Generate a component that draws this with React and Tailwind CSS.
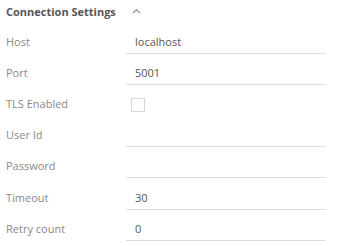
import React from "react";

const rows = [
  { label: "Host", value: "localhost" },
  { label: "Port", value: "5001" },
  { label: "TLS Enabled", checkbox: true },
  { label: "User Id", value: "" },
  { label: "Password", value: "" },
  { label: "Timeout", value: "30", extra: "mt-[1px]" },
  { label: "Retry count", value: "0" },
];

const App = () => {
  return (
    <div
      className="w-[341px] h-[246px] bg-white pl-[6px] overflow-hidden"
      style={{ fontFamily: '"Open Sans", sans-serif' }}
    >
      <div className="h-[27px] pt-[4px] flex items-start">
        <span className="text-[11px] leading-[16px] font-bold text-[#555]">Connection Settings</span>
        <svg className="ml-[16px] mt-[4px]" width="9" height="6" viewBox="0 0 9 6">
          <polyline points="1,5 4.5,1.5 8,5" fill="none" stroke="#8a8f99" strokeWidth="1.1" />
        </svg>
      </div>
      {rows.map((row) => (
        <div key={row.label} className={`flex items-center h-[31px] ${row.extra || ""}`}>
          <label className="w-[120px] text-[11px] text-[#888]">{row.label}</label>
          {row.checkbox ? (
            <div className="ml-[5px] w-[14px] h-[14px] border border-[#d6d6d6] bg-white" />
          ) : (
            <div className="w-[200px] h-[22px] border-b border-[#dcdcdc] pl-[9px] flex items-center text-[11px] text-[#555]">
              {row.value}
            </div>
          )}
        </div>
      ))}
    </div>
  );
};

export default App;
